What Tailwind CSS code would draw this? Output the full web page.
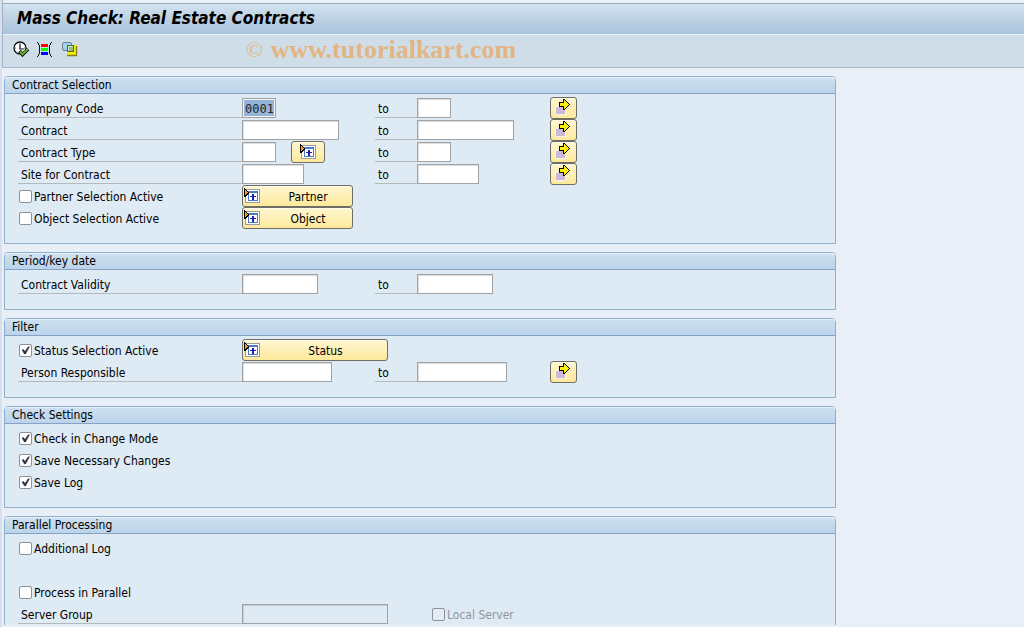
<!DOCTYPE html>
<html lang="en">
<head>
<meta charset="utf-8">
<title>Mass Check: Real Estate Contracts</title>
<script src="https://cdn.jsdelivr.net/npm/@tailwindcss/browser@4"></script>
</head>
<body class="flex h-screen flex-col overflow-hidden border-l-2 border-[#d9dfec] bg-[#e8eff6] pb-0.5 font-['DejaVu_Sans_Condensed','DejaVu_Sans',sans-serif] text-xs text-black">
<svg class="hidden">
  <symbol id="expand" viewBox="0 0 16 16" shape-rendering="crispEdges">
    <path d="M1 1h15v14H1z" fill="#9a9ca2"/><path d="M2 2h13v12H2z" fill="#fff"/>
    <path d="M4 3h10v10H4z" fill="#4a7cc4"/><path d="M5 5h8v7H5z" fill="#fff"/>
    <path d="M8 6h2v2h2v1h-2v3H8V9H6V8h2z" fill="#2020b8"/>
    <path d="M0 0h1v1h1v1h1v1h1v1h1v2H4v1H3v1H2v1H0z" fill="#000"/>
    <path d="M1 2h1v1h1v1h1v1H3v1H2v1H1z" fill="#ff9a10"/>
  </symbol>
  <symbol id="arrow" viewBox="0 0 16 16" shape-rendering="crispEdges">
    <rect x="0" y="7" width="11" height="9" fill="#f7f3fa"/><rect x="1" y="8" width="9" height="7" fill="#cdb8dc"/>
    <path d="M8 0h2v1h1v1h1v1h1v1h1v1h1v1h-1v1h-1v1h-1v1h-1v1h-1v1H8V8H4V3h4z" fill="#000"/>
    <path d="M9 1v3H5v3h4v3h1V9h1V8h1V7h1V6h1V5h-1V4h-1V3h-1V2h-1V1z" fill="#fff000"/>
  </symbol>
  <symbol id="tick" viewBox="0 0 13 13"><path d="M3 6l1.500-.5 1.500 2L9 3l1.500-.3L6.500 10H5.500z" fill="#2a2d42" stroke="#2a2d42" stroke-width=".5"/></symbol>
</svg>

<header class="border-l border-[#a3b2c4]">
  <h1 class="mt-[3px] flex h-8 items-center border-y border-t-[#9eabbd] border-b-[#eaf1f8] bg-linear-to-b from-[#d3e3f2] via-[#bdd1e2] to-[#abc3de] pb-0.5 pl-3.5 text-[17px] font-bold italic leading-none">Mass Check: Real Estate Contracts</h1>
  <div class="flex h-[33px] items-center border-b border-[#a6b7c8] bg-[#cfdde8] pl-2.5">
    <button aria-label="Execute" class="-mt-1 mr-[7px]"><svg class="size-[17px]" viewBox="0 0 17 17">
      <circle cx="7" cy="7" r="6" fill="#fff" stroke="#111" stroke-width="1.300"/>
      <path d="M7 1.500v1.500M7 11v1.500M1.500 7h1.500M11 7h1.500" fill="none" stroke="#555" stroke-width="1"/>
      <path d="M7 3v5h4" fill="none" stroke="#111" stroke-width="1.200"/>
      <path d="M6.500 10l3 3.500 5.500-5.500" fill="none" stroke="#111" stroke-width="3.600"/><path d="M7 10.500l2.500 2.800L14.700 8" fill="none" stroke="#67b32e" stroke-width="2"/></svg></button>
    <button aria-label="Selection options" class="-mt-1 mr-2"><svg class="size-[17px]" viewBox="0 0 17 17" shape-rendering="crispEdges">
      <path d="M0 1h1v1h1v2h1v9H2v2H1v1H0v-1h1v-2h1V4H1V2H0zM15 1h-1v1h-1v2h-1v9h1v2h1v1h1v-1h-1v-2h-1V4h1V2h1z" fill="#111"/>
      <path d="M4 3h7v3H4z" fill="#f00"/><path d="M4 7h7v3H4z" fill="#0f0"/><path d="M4 11h7v3H4z" fill="#00f"/></svg></button>
    <button aria-label="Get variant" class="-mt-1"><svg class="size-[17px]" viewBox="0 0 17 17">
      <rect x=".5" y="1.500" width="9" height="8" rx="1.500" fill="#9fd2f5" stroke="#6a8399"/>
      <path d="M5 4h10v10H5z" fill="#f5ec10"/><path d="M5 14.500h9.500V5" fill="none" stroke="#8a7f10" stroke-width="1.300"/>
      <rect x="5.500" y="4.500" width="6" height="6" fill="#8fbf84" stroke="#4d6a33"/><path d="M6.500 10V5.500H11" fill="none" stroke="#d4e9c0"/></svg></button>
    <p class="-mt-0.5 ml-[167px] flex items-center gap-2 font-['Liberation_Serif',serif] text-[26px] leading-none text-[#e3b582]"><span class="text-[22px]">©</span><span class="font-bold">www.tutorialkart.com</span></p>
  </div>
</header>

<main class="flex flex-col gap-2 overflow-hidden pl-0.5 pt-2 pr-2">
  <section class="w-full max-w-[832px] shrink-0 rounded-t border border-[#8fafcf] bg-[#deeaf4] pb-3.5">
    <h2 class="mb-[3px] h-[17px] rounded-t-[3px] border-b border-[#86a3c6] bg-linear-to-b from-[#cfe1f1] to-[#bcd3e9] pl-[7px] leading-4 shadow-[inset_0_1px_0_#e6f2fb]">Contract Selection</h2>
    <div class="grid grid-cols-[224px_133px_42px_133px_27px] items-center pl-[13px]">
      <label for="cc" class="mb-px h-[21px] border-b border-[#b4b9be] pl-[3px] leading-6">Company Code</label>
      <input id="cc" value="0001" class="h-5 w-[34px] border border-[#a0a3a6] bg-[#96b4d5] px-0.5 pt-0.5 font-['DejaVu_Sans_Mono',monospace] text-[#1c2430] shadow-[inset_0_0_0_1px_#f4f4f4]">
      <label for="cc2" class="mb-px h-[21px] border-b border-[#b4b9be] pl-[3px] leading-6">to</label>
      <input id="cc2" class="h-5 w-[34px] border border-[#a0a3a6] bg-white shadow-[inset_1px_1px_1px_#dcdcdc]">
      <button aria-label="Multiple selection for company code" class="flex h-[22px] rounded-[3px] border border-[#6e6d66] bg-linear-to-b from-[#fff6d0] to-[#fde99b] pl-1 pt-px shadow-[inset_0_1px_0_#fffbe8]"><svg class="size-4"><use href="#arrow"/></svg></button>

      <label for="ct" class="mb-px h-[21px] border-b border-[#b4b9be] pl-[3px] leading-6">Contract</label>
      <input id="ct" class="h-5 w-[97px] border border-[#a0a3a6] bg-white shadow-[inset_1px_1px_1px_#dcdcdc]">
      <label for="ct2" class="mb-px h-[21px] border-b border-[#b4b9be] pl-[3px] leading-6">to</label>
      <input id="ct2" class="h-5 w-[97px] border border-[#a0a3a6] bg-white shadow-[inset_1px_1px_1px_#dcdcdc]">
      <button aria-label="Multiple selection for contract" class="flex h-[22px] rounded-[3px] border border-[#6e6d66] bg-linear-to-b from-[#fff6d0] to-[#fde99b] pl-1 pt-px shadow-[inset_0_1px_0_#fffbe8]"><svg class="size-4"><use href="#arrow"/></svg></button>

      <label for="ty" class="mb-px h-[21px] border-b border-[#b4b9be] pl-[3px] leading-6">Contract Type</label>
      <div class="flex items-center gap-[15px]">
        <input id="ty" class="h-5 w-[34px] border border-[#a0a3a6] bg-white shadow-[inset_1px_1px_1px_#dcdcdc]">
        <button aria-label="Choose contract types" class="flex h-[22px] w-[34px] justify-center rounded-[3px] border border-[#6e6d66] bg-linear-to-b from-[#fff6d0] to-[#fde99b] pt-0.5 shadow-[inset_0_1px_0_#fffbe8]"><svg class="size-4"><use href="#expand"/></svg></button>
      </div>
      <label for="ty2" class="mb-px h-[21px] border-b border-[#b4b9be] pl-[3px] leading-6">to</label>
      <input id="ty2" class="h-5 w-[34px] border border-[#a0a3a6] bg-white shadow-[inset_1px_1px_1px_#dcdcdc]">
      <button aria-label="Multiple selection for contract type" class="flex h-[22px] rounded-[3px] border border-[#6e6d66] bg-linear-to-b from-[#fff6d0] to-[#fde99b] pl-1 pt-px shadow-[inset_0_1px_0_#fffbe8]"><svg class="size-4"><use href="#arrow"/></svg></button>

      <label for="si" class="mb-px h-[21px] border-b border-[#b4b9be] pl-[3px] leading-6">Site for Contract</label>
      <input id="si" class="h-5 w-[62px] border border-[#a0a3a6] bg-white shadow-[inset_1px_1px_1px_#dcdcdc]">
      <label for="si2" class="mb-px h-[21px] border-b border-[#b4b9be] pl-[3px] leading-6">to</label>
      <input id="si2" class="h-5 w-[62px] border border-[#a0a3a6] bg-white shadow-[inset_1px_1px_1px_#dcdcdc]">
      <button aria-label="Multiple selection for site" class="flex h-[22px] rounded-[3px] border border-[#6e6d66] bg-linear-to-b from-[#fff6d0] to-[#fde99b] pl-1 pt-px shadow-[inset_0_1px_0_#fffbe8]"><svg class="size-4"><use href="#arrow"/></svg></button>

      <label class="flex h-[22px] items-center gap-0.5 pl-px pt-0.5"><input type="checkbox" class="-mt-0.5 size-[13px] appearance-none rounded-xs border border-[#8e9195] bg-white">Partner Selection Active</label>
      <button class="col-span-4 flex h-[22px] w-[111px] rounded-[3px] border border-[#6e6d66] bg-linear-to-b from-[#fff6d0] to-[#fde99b] pl-px pt-0.5 shadow-[inset_0_1px_0_#fffbe8]"><svg class="mr-1 size-4"><use href="#expand"/></svg><span class="flex-1 leading-[18px]">Partner</span></button>
      <label class="flex h-[22px] items-center gap-0.5 pl-px pt-0.5"><input type="checkbox" class="-mt-0.5 size-[13px] appearance-none rounded-xs border border-[#8e9195] bg-white">Object Selection Active</label>
      <button class="col-span-4 flex h-[22px] w-[111px] rounded-[3px] border border-[#6e6d66] bg-linear-to-b from-[#fff6d0] to-[#fde99b] pl-px pt-0.5 shadow-[inset_0_1px_0_#fffbe8]"><svg class="mr-1 size-4"><use href="#expand"/></svg><span class="flex-1 leading-[18px]">Object</span></button>
    </div>
  </section>

  <section class="w-full max-w-[832px] shrink-0 rounded-t border border-[#8fafcf] bg-[#deeaf4] pb-3.5">
    <h2 class="mb-[3px] h-[17px] rounded-t-[3px] border-b border-[#86a3c6] bg-linear-to-b from-[#cfe1f1] to-[#bcd3e9] pl-[7px] leading-4 shadow-[inset_0_1px_0_#e6f2fb]">Period/key date</h2>
    <div class="grid grid-cols-[224px_133px_42px_133px_27px] items-center pl-[13px]">
      <label for="va" class="mb-px h-[21px] border-b border-[#b4b9be] pl-[3px] leading-6">Contract Validity</label>
      <input id="va" class="h-5 w-[76px] border border-[#a0a3a6] bg-white shadow-[inset_1px_1px_1px_#dcdcdc]">
      <label for="va2" class="mb-px h-[21px] border-b border-[#b4b9be] pl-[3px] leading-6">to</label>
      <input id="va2" class="h-5 w-[76px] border border-[#a0a3a6] bg-white shadow-[inset_1px_1px_1px_#dcdcdc]">
    </div>
  </section>

  <section class="w-full max-w-[832px] shrink-0 rounded-t border border-[#8fafcf] bg-[#deeaf4] pb-3.5">
    <h2 class="mb-[3px] h-[17px] rounded-t-[3px] border-b border-[#86a3c6] bg-linear-to-b from-[#cfe1f1] to-[#bcd3e9] pl-[7px] leading-4 shadow-[inset_0_1px_0_#e6f2fb]">Filter</h2>
    <div class="grid grid-cols-[224px_133px_42px_133px_27px] items-center pl-[13px]">
      <label class="relative flex h-[22px] items-center gap-0.5 pl-px pt-0.5"><input type="checkbox" checked class="peer -mt-0.5 size-[13px] appearance-none rounded-xs border border-[#8e9195] bg-white"><svg class="pointer-events-none absolute left-px -mt-0.5 hidden size-[13px] peer-checked:block"><use href="#tick"/></svg>Status Selection Active</label>
      <button class="col-span-4 flex h-[22px] w-[146px] rounded-[3px] border border-[#6e6d66] bg-linear-to-b from-[#fff6d0] to-[#fde99b] pl-px pt-0.5 shadow-[inset_0_1px_0_#fffbe8]"><svg class="mr-1 size-4"><use href="#expand"/></svg><span class="flex-1 leading-[18px]">Status</span></button>
      <label for="pr" class="mb-px h-[21px] border-b border-[#b4b9be] pl-[3px] leading-6">Person Responsible</label>
      <input id="pr" class="h-5 w-[90px] border border-[#a0a3a6] bg-white shadow-[inset_1px_1px_1px_#dcdcdc]">
      <label for="pr2" class="mb-px h-[21px] border-b border-[#b4b9be] pl-[3px] leading-6">to</label>
      <input id="pr2" class="h-5 w-[90px] border border-[#a0a3a6] bg-white shadow-[inset_1px_1px_1px_#dcdcdc]">
      <button aria-label="Multiple selection for person responsible" class="flex h-[22px] rounded-[3px] border border-[#6e6d66] bg-linear-to-b from-[#fff6d0] to-[#fde99b] pl-1 pt-px shadow-[inset_0_1px_0_#fffbe8]"><svg class="size-4"><use href="#arrow"/></svg></button>
    </div>
  </section>

  <section class="w-full max-w-[832px] shrink-0 rounded-t border border-[#8fafcf] bg-[#deeaf4] pb-3.5">
    <h2 class="mb-[3px] h-[17px] rounded-t-[3px] border-b border-[#86a3c6] bg-linear-to-b from-[#cfe1f1] to-[#bcd3e9] pl-[7px] leading-4 shadow-[inset_0_1px_0_#e6f2fb]">Check Settings</h2>
    <div class="flex flex-col items-start pl-[13px]">
      <label class="relative flex h-[22px] items-center gap-0.5 pl-px pt-0.5"><input type="checkbox" checked class="peer -mt-0.5 size-[13px] appearance-none rounded-xs border border-[#8e9195] bg-white"><svg class="pointer-events-none absolute left-px -mt-0.5 hidden size-[13px] peer-checked:block"><use href="#tick"/></svg>Check in Change Mode</label>
      <label class="relative flex h-[22px] items-center gap-0.5 pl-px pt-0.5"><input type="checkbox" checked class="peer -mt-0.5 size-[13px] appearance-none rounded-xs border border-[#8e9195] bg-white"><svg class="pointer-events-none absolute left-px -mt-0.5 hidden size-[13px] peer-checked:block"><use href="#tick"/></svg>Save Necessary Changes</label>
      <label class="relative flex h-[22px] items-center gap-0.5 pl-px pt-0.5"><input type="checkbox" checked class="peer -mt-0.5 size-[13px] appearance-none rounded-xs border border-[#8e9195] bg-white"><svg class="pointer-events-none absolute left-px -mt-0.5 hidden size-[13px] peer-checked:block"><use href="#tick"/></svg>Save Log</label>
    </div>
  </section>

  <section class="w-full max-w-[832px] shrink-0 rounded-t border border-[#8fafcf] bg-[#deeaf4] pb-3.5">
    <h2 class="mb-[3px] h-[17px] rounded-t-[3px] border-b border-[#86a3c6] bg-linear-to-b from-[#cfe1f1] to-[#bcd3e9] pl-[7px] leading-4 shadow-[inset_0_1px_0_#e6f2fb]">Parallel Processing</h2>
    <div class="grid grid-cols-[224px_190px_1fr] items-center pl-[13px]">
      <label class="col-span-3 mb-[22px] flex h-[22px] items-center gap-0.5 pl-px pt-0.5"><input type="checkbox" class="-mt-0.5 size-[13px] appearance-none rounded-xs border border-[#8e9195] bg-white">Additional Log</label>
      <label class="col-span-3 flex h-[22px] items-center gap-0.5 pl-px pt-0.5"><input type="checkbox" class="-mt-0.5 size-[13px] appearance-none rounded-xs border border-[#8e9195] bg-white">Process in Parallel</label>
      <label for="sg" class="mb-px h-[21px] border-b border-[#b4b9be] pl-[3px] leading-6">Server Group</label>
      <input id="sg" disabled class="h-5 w-[146px] border border-[#a0a3a6] bg-[#deeaf4] shadow-[inset_1px_1px_1px_#c4ccd4]">
      <label class="flex h-[22px] items-center gap-0.5 pt-0.5 text-[#8f969d]"><input type="checkbox" disabled class="-mt-0.5 size-[13px] appearance-none rounded-xs border border-[#8e9195] bg-[#e2ecf5]">Local Server</label>
    </div>
  </section>
</main>
</body>
</html>
